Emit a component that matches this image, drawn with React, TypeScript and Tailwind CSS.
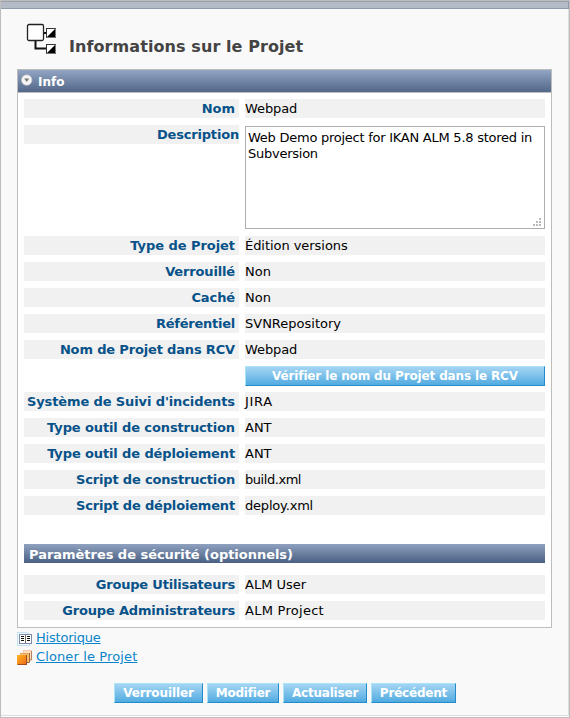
import React from "react";

type RowData = { label: string; value: string; ls?: string; vs?: string };

const mainRows: RowData[] = [
  { label: "Type de Projet", value: "Édition versions", ls: "tracking-[-0.05px]", vs: "tracking-[-0.05px]" },
  { label: "Verrouillé", value: "Non", ls: "tracking-[-0.15px]" },
  { label: "Caché", value: "Non", ls: "tracking-[-0.1px]" },
  { label: "Référentiel", value: "SVNRepository", ls: "tracking-[-0.25px]" },
  { label: "Nom de Projet dans RCV", value: "Webpad", ls: "tracking-[-0.16px]", vs: "tracking-[-0.1px]" },
];

const toolRows: RowData[] = [
  { label: "Système de Suivi d'incidents", value: "JIRA", ls: "tracking-[-0.11px]", vs: "tracking-[0.7px]" },
  { label: "Type outil de construction", value: "ANT", ls: "tracking-[-0.12px]" },
  { label: "Type outil de déploiement", value: "ANT", ls: "tracking-[-0.12px]" },
  { label: "Script de construction", value: "build.xml", ls: "tracking-[-0.17px]", vs: "tracking-[-0.45px]" },
  { label: "Script de déploiement", value: "deploy.xml", ls: "tracking-[-0.17px]", vs: "tracking-[-0.2px]" },
];

const securityRows: RowData[] = [
  { label: "Groupe Utilisateurs", value: "ALM User", ls: "tracking-[-0.2px]" },
  { label: "Groupe Administrateurs", value: "ALM Project", ls: "tracking-[-0.17px]", vs: "tracking-[0.27px]" },
];

function Row({ label, value, ls = "", vs = "" }: RowData) {
  return (
    <div className="flex h-[19px] gap-1.5 leading-[19px]">
      <div className={"w-[215px] bg-[#f1f1f1] pr-1 text-right font-bold text-[#075289] " + ls}>{label}</div>
      <div className={"w-[300px] bg-[#f1f1f1] text-black " + vs}>{value}</div>
    </div>
  );
}

function Button({ children, className }: { children: React.ReactNode; className: string }) {
  return (
    <button
      className={
        "block h-5 border border-t-[#a9e4fa] border-r-[#218cc9] border-b-[#218cc9] border-l-[#a9e4fa] bg-linear-to-b from-[#a3d5f3] to-[#50abe0] text-center text-[12px] leading-[18px] font-bold whitespace-nowrap text-white " +
        className
      }
    >
      {children}
    </button>
  );
}

function ProjectIcon() {
  return (
    <svg width="32" height="32" viewBox="0 0 32 32" className="block">
      <path d="M17 10h3M9.500 17v8.500h11" fill="none" stroke="#111" strokeWidth="2" />
      <rect x="1.500" y="1.500" width="16" height="16" rx="1.500" fill="#fff" stroke="#222" strokeWidth="1.300" />
      <g>
        <rect x="20.500" y="5.500" width="9" height="9" fill="#fff" stroke="#333" />
        <path d="M29 6v8h-8z" fill="#000" />
        <path d="M20.500 14.500h9v-9" fill="none" stroke="#777" />
      </g>
      <g>
        <rect x="20.500" y="21.500" width="9" height="9" fill="#fff" stroke="#333" />
        <path d="M29 22v8h-8z" fill="#000" />
        <path d="M20.500 30.500h9v-9" fill="none" stroke="#777" />
      </g>
    </svg>
  );
}

function HistoryIcon() {
  return (
    <svg width="16" height="16" viewBox="0 0 16 16" className="block" shapeRendering="crispEdges">
      <path d="M.5 1.500h9l3 2v11H.5z" fill="#f4faff" stroke="#c3dff2" />
      <rect x="2" y="3" width="13" height="10" fill="#7b8ba8" />
      <rect x="3" y="4" width="5" height="8" fill="#fff" />
      <rect x="9" y="4" width="5" height="8" fill="#fff" />
      <path d="M4 5.500h3M4 7.500h3M4 9.500h3M10 5.500h3M10 7.500h3M10 9.500h3" stroke="#111" />
      <path d="M8.500 4v8" stroke="#776f5b" />
    </svg>
  );
}

function CloneIcon() {
  return (
    <svg width="16" height="16" viewBox="0 0 16 16" className="block">
      <defs>
        <linearGradient id="front" x1="0" y1="0" x2="1" y2="1">
          <stop offset="0" stopColor="#ffb51f" />
          <stop offset="1" stopColor="#ec651d" />
        </linearGradient>
      </defs>
      <rect x="6.500" y=".5" width="8" height="9" fill="#fbe2bd" stroke="#f4c5b0" />
      <path d="M14.500 1v9h-3" fill="none" stroke="#b98262" />
      <rect x="3" y="3" width="9" height="9" fill="#f7bd68" />
      <path d="M3 3.500h8.500" fill="none" stroke="#e0a06a" />
      <path d="M12.500 3v9.500h-3" fill="none" stroke="#a5643d" />
      <rect x="0" y="5" width="10" height="10" fill="url(#front)" />
      <path d="M9.500 5v9.500H1" fill="none" stroke="#9c4a1f" />
    </svg>
  );
}

function CollapseIcon() {
  return (
    <svg width="12" height="12" viewBox="0 0 12 12" className="mb-0.5 block">
      <circle cx="5.700" cy="6" r="5.200" fill="#f6f6f4" stroke="#c9c9c9" strokeWidth=".7" />
      <path d="M3.200 4.500h5L5.700 8z" fill="#777" />
    </svg>
  );
}

export default function App() {
  return (
    <div className="flex h-[718px] w-[570px] flex-col border border-[#bdbdbd] bg-[#f9f9f9] font-['Verdana','DejaVu_Sans',sans-serif] text-[13px]">
      <div className="h-2 shrink-0 border-y border-r border-t-[#9aa0aa] border-r-[#929bab] border-b-[#929bab] bg-[#b4bbc6]" />
      <div className="flex grow flex-col border-r border-r-[#dedede] pl-4">
        <div className="flex h-[60px] shrink-0">
          <div className="pt-[14px] pl-[9px]">
            <ProjectIcon />
          </div>
          <h1 className="pt-[28px] pl-[11px] text-[16px] leading-5 font-bold tracking-[0.08px] whitespace-nowrap text-[#444]">
            Informations sur le Projet
          </h1>
        </div>

        <section className="h-[559px] w-[535px] shrink-0 border border-[#bdbdbd] bg-white">
          <header className="flex h-[23px] items-center gap-[5px] border-b border-[#bdbdbd] bg-linear-to-b from-[#92a5c3] to-[#536789] pl-[3px] text-[12px] font-bold text-white">
            <CollapseIcon />
            <span className="pt-0.5">Info</span>
          </header>
          <div className="flex flex-col gap-[7px] px-1.5 pt-1.5 whitespace-nowrap">
            <Row label="Nom" value="Webpad" vs="tracking-[-0.1px]" />
            <div className="flex h-[104px] gap-1.5">
              <div className="h-[19px] w-[215px] bg-[#f1f1f1] text-right leading-[19px] font-bold tracking-[-0.18px] text-[#075289]">
                Description
              </div>
              <div className="mt-px flex h-[103px] w-[300px] items-end justify-between border border-[#abadb3] bg-white">
                <p className="self-start pt-[3px] pl-0.5 leading-4 tracking-[-0.25px] text-black">
                  Web Demo project for IKAN ALM 5.8 stored in
                  <br />
                  Subversion
                </p>
                <svg width="8" height="8" viewBox="0 0 8 8" className="mr-[3px] mb-0.5 shrink-0" fill="#bbb">
                  <path d="M6 0h2v2H6zM3 3h2v2H3zM6 3h2v2H6zM0 6h2v2H0zM3 6h2v2H3zM6 6h2v2H6z" />
                </svg>
              </div>
            </div>
            {mainRows.map((r) => (
              <Row key={r.label} {...r} />
            ))}
            <div className="-mb-px pl-[221px]">
              <Button className="w-[300px] tracking-[-0.14px]">Vérifier le nom du Projet dans le RCV</Button>
            </div>
            {toolRows.map((r) => (
              <Row key={r.label} {...r} />
            ))}
            <h2 className="mt-[22px] mb-[5px] h-[19px] bg-linear-to-b from-[#8fa1bf] to-[#4a6083] pl-[5px] leading-[21px] font-bold tracking-[-0.03px] text-white">
              Paramètres de sécurité (optionnels)
            </h2>
            {securityRows.map((r) => (
              <Row key={r.label} {...r} />
            ))}
          </div>
        </section>

        <nav className="flex h-[55px] shrink-0 flex-col pt-px leading-[17px] text-[#0a85cb]">
          <a className="flex h-[19px] gap-[3px]" href="#historique">
            <span className="pt-0.5">
              <HistoryIcon />
            </span>
            <span className="tracking-[-0.2px] underline">Historique</span>
          </a>
          <a className="flex h-[19px] gap-[3px]" href="#cloner">
            <span className="pt-0.5">
              <CloneIcon />
            </span>
            <span className="tracking-[0.12px] underline">Cloner le Projet</span>
          </a>
        </nav>

        <div className="flex gap-1 pl-[97px]">
          <Button className="w-[89px] tracking-[-0.1px]">Verrouiller</Button>
          <Button className="w-[72px] tracking-[-0.2px]">Modifier</Button>
          <Button className="w-[84px] tracking-[-0.2px]">Actualiser</Button>
          <Button className="w-[85px] tracking-[-0.2px]">Précédent</Button>
        </div>
      </div>
      <div className="h-0.5 shrink-0 border-t border-[#dedede] bg-white" />
    </div>
  );
}
